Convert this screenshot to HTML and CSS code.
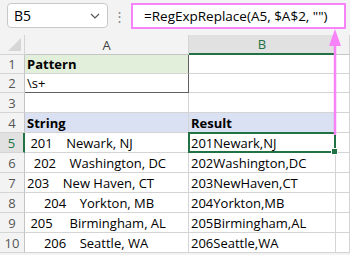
FILE: index.html
```html
<!DOCTYPE html>
<html lang="en">
<head>
  <meta charset="UTF-8">
  <title>RegExpReplace</title>
  <link rel="stylesheet" href="styles.css">
</head>
<body>
  <header class="formula-bar">
    <div class="name-box">
      <span>B5</span>
      <svg class="chevron" width="10" height="6" viewBox="0 0 10 6"><polyline points="1,1 5,5 9,1" fill="none" stroke="#555" stroke-width="1.2"/></svg>
    </div>
    <div class="dots">⋮</div>
    <div class="formula">=RegExpReplace(A5, $A$2, "")</div>
  </header>

  <div class="sheet">
    <div class="corner"><span class="tri"></span></div>
    <div class="col-head">A</div>
    <div class="col-head active">B</div>
    <div class="col-head"></div>

    <div class="row-head">1</div>
    <div class="cell pattern bold tbl-right">Pattern</div>
    <div class="cell"></div>
    <div class="cell"></div>

    <div class="row-head">2</div>
    <div class="cell tbl-right tbl-bottom">\s+</div>
    <div class="cell"></div>
    <div class="cell"></div>

    <div class="row-head">3</div>
    <div class="cell"></div>
    <div class="cell"></div>
    <div class="cell"></div>

    <div class="row-head">4</div>
    <div class="cell head bold">String</div>
    <div class="cell head bold">Result</div>
    <div class="cell"></div>

    <div class="row-head active">5</div>
    <div class="cell"> 201    Newark, NJ</div>
    <div class="cell selected">201Newark,NJ<span class="handle"></span></div>
    <div class="cell"></div>

    <div class="row-head">6</div>
    <div class="cell">  202    Washington, DC</div>
    <div class="cell">202Washington,DC</div>
    <div class="cell"></div>

    <div class="row-head">7</div>
    <div class="cell">203    New Haven, CT</div>
    <div class="cell">203NewHaven,CT</div>
    <div class="cell"></div>

    <div class="row-head">8</div>
    <div class="cell">     204    Yorkton, MB</div>
    <div class="cell">204Yorkton,MB</div>
    <div class="cell"></div>

    <div class="row-head">9</div>
    <div class="cell"> 205     Birmingham, AL</div>
    <div class="cell">205Birmingham,AL</div>
    <div class="cell"></div>

    <div class="row-head">10</div>
    <div class="cell">     206    Seattle, WA</div>
    <div class="cell">206Seattle,WA</div>
    <div class="cell"></div>
  </div>

  <svg class="arrow" width="14" height="108" viewBox="0 0 14 108">
    <line x1="7" y1="14" x2="7" y2="107" stroke="#f882f8" stroke-width="2.5"/>
    <polygon points="7,1 1,18 13,18" fill="#f882f8"/>
  </svg>
</body>
</html>
```

FILE: styles.css
```css
*{box-sizing:border-box;margin:0;padding:0}
html,body{font-family:"Open Sans",Arial,sans-serif;font-size:13px;color:#000}
body{background:#f3f3f3;width:350px;height:255px;overflow:hidden;position:relative}

.formula-bar{display:flex;align-items:center;height:35px;padding:0 4px 4px 7px}
.name-box{
  display:flex;justify-content:space-between;align-items:center;
  width:101px;height:25px;padding:0 7px 0 6px;
  background:#fff;border:1px solid #c9c9c9;border-radius:4px;
  font-size:14px;
}
.dots{width:23px;text-align:center;color:#888;font-size:13px}
.formula{
  flex:1;height:26px;display:flex;align-items:center;
  padding-left:11px;background:#fff;border:2px solid #f882f8;
  font-size:13.5px;white-space:pre;
}

.sheet{
  display:grid;
  grid-template-columns:25px 164px 147px 1fr;
  grid-template-rows:20px 19px 19px 20px repeat(7,20px);
  background:#fff;
}
.corner{background:#f3f3f3;border-right:1px solid #d4d4d4;border-bottom:1px solid #d4d4d4;position:relative}
.tri{
  position:absolute;right:3px;bottom:3px;width:0;height:0;
  border-left:13px solid transparent;border-bottom:13px solid #d6d6d6;
}
.col-head{
  background:#f3f3f3;border-right:1px solid #d4d4d4;border-bottom:1px solid #c4c4c4;
  display:flex;align-items:center;justify-content:center;color:#444;font-size:13px;
}
.col-head.active{background:#e1e1e1;color:#217346;border-bottom:2px solid #217346}
.row-head{
  background:#f3f3f3;border-right:1px solid #c4c4c4;border-bottom:1px solid #d4d4d4;
  display:flex;align-items:center;justify-content:center;color:#555;font-size:13px;
}
.row-head.active{background:#e1e1e1;color:#217346;border-right:2px solid #217346}
.cell{
  border-right:1px solid #d4d4d4;border-bottom:1px solid #d4d4d4;
  padding-left:2px;display:flex;align-items:center;white-space:pre;
  position:relative;
}
.bold{font-weight:700}
.pattern{background:#e2efda}
.head{background:#d9e1f2}
.tbl-right{border-right:1px solid #616161}
.tbl-bottom{border-bottom:1px solid #616161}
.selected::after{
  content:"";position:absolute;left:-1px;top:-1px;right:-1px;bottom:-1px;
  border:2px solid #217346;
}
.handle{
  position:absolute;right:-3px;bottom:-3px;width:5px;height:5px;
  background:#217346;border:1px solid #fff;z-index:2;box-sizing:content-box;
}
.arrow{position:absolute;left:328px;top:28px}
```
